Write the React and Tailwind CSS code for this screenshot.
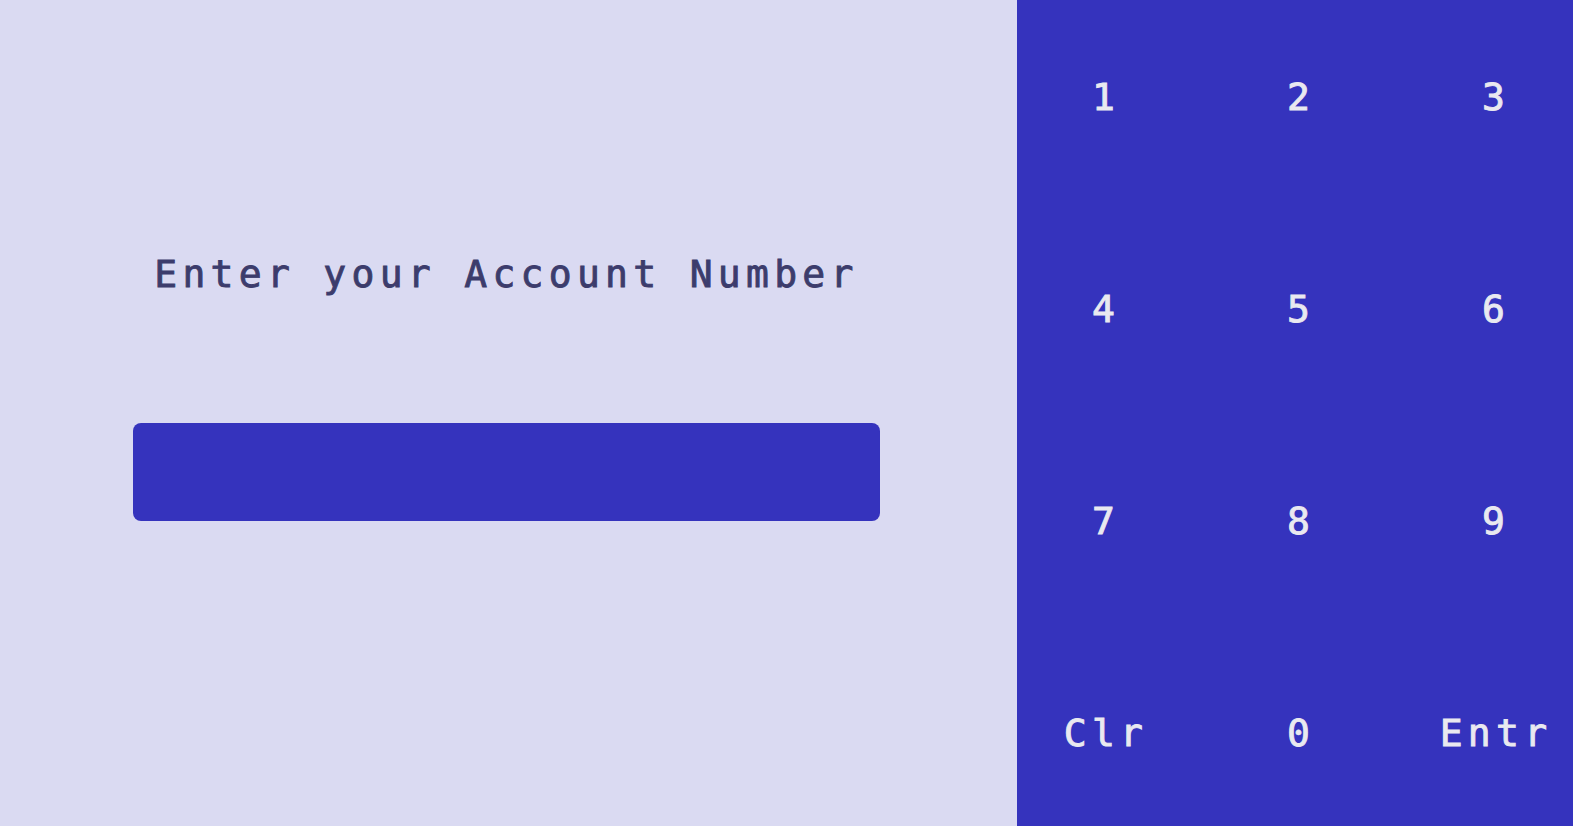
import React, { useState } from 'react';

const KEYS = ['1', '2', '3', '4', '5', '6', '7', '8', '9', 'Clr', '0', 'Entr'];

const App = () => {
  const [account, setAccount] = useState('');

  const press = (key) => {
    if (key === 'Clr') setAccount('');
    else if (key === 'Entr') return;
    else setAccount((prev) => (prev + key).slice(0, 16));
  };

  return (
    <div className="w-full h-screen flex overflow-hidden font-['DejaVu_Sans_Mono','Liberation_Mono',monospace] text-[38px] tracking-[5.3px] [-webkit-text-stroke:0.9px_currentColor]">
      <div className="w-[1017px] shrink-0 h-full bg-[#dadaf2] pl-[133px] pt-[252px] flex flex-col">
        <h1 className="w-[747px] text-center text-[#3c3c6c] leading-[44px] font-normal">
          Enter your Account Number
        </h1>
        <div className="mt-[127px] w-[747px] h-[98px] rounded-lg bg-[#3533bd] flex items-center justify-center text-[#e9e9f0]">
          {account}
        </div>
      </div>

      <div className="flex-1 h-full bg-[#3533bd] overflow-hidden">
        <div className="-ml-[11px] -mt-[9px] w-[585px] grid grid-cols-3 grid-rows-[repeat(4,212px)]">
          {KEYS.map((key) => (
            <button
              key={key}
              onClick={() => press(key)}
              className="flex items-center justify-center text-[#e9e9f0] leading-[44px] pl-[5px] cursor-pointer"
            >
              {key}
            </button>
          ))}
        </div>
      </div>
    </div>
  );
};

export default App;
